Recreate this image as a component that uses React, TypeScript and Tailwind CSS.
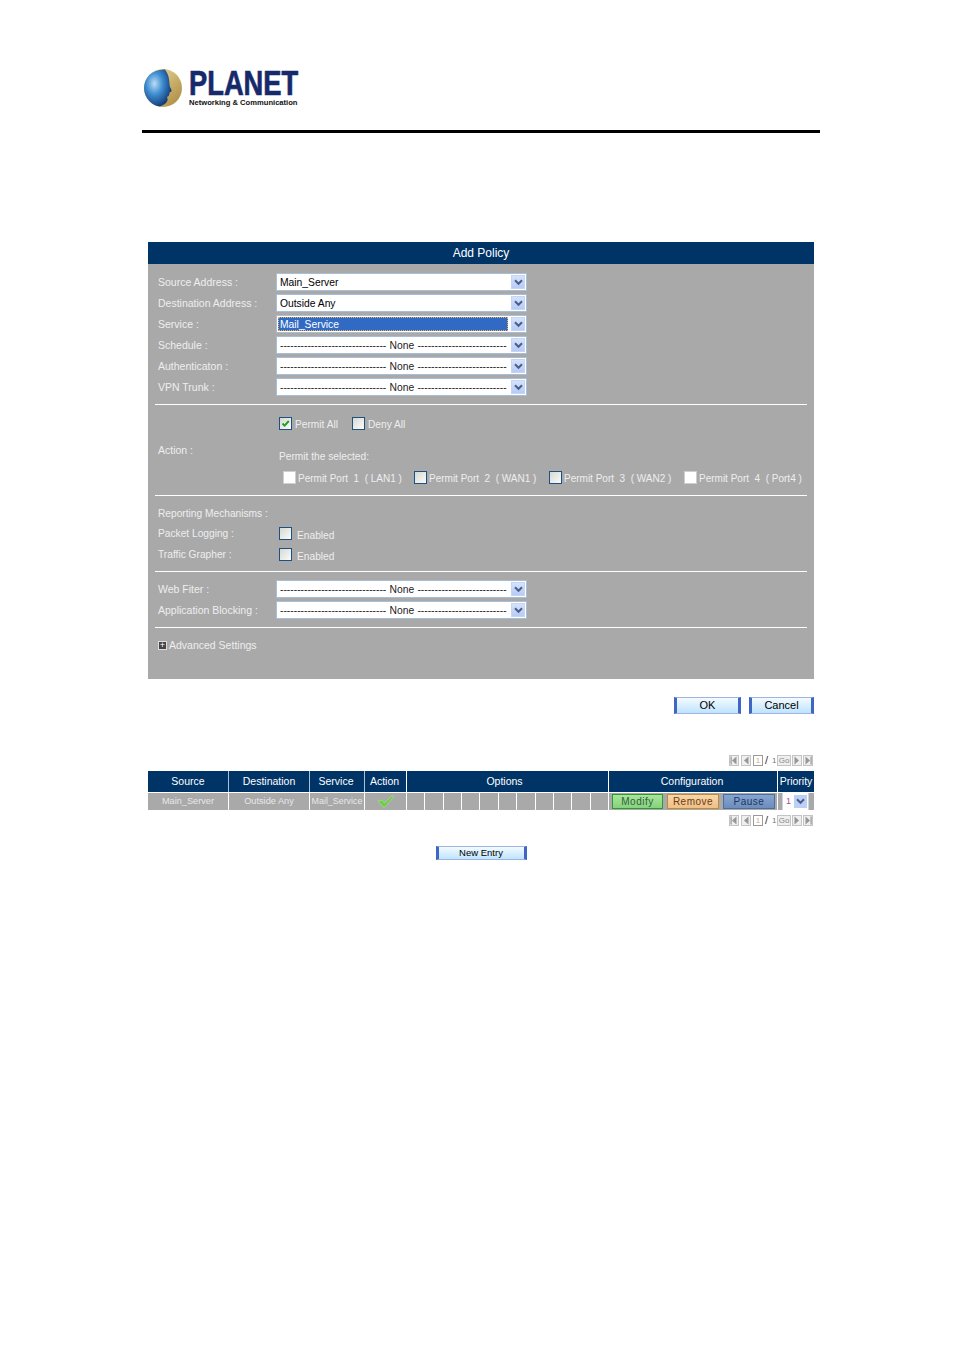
import React from 'react';

const font = "font-['Liberation_Sans','Arial',sans-serif]";

const Chevron = () => (
  <svg width="9" height="7" viewBox="0 0 9 7">
    <path d="M1 1.2 L4.5 4.8 L8 1.2" fill="none" stroke="#4a5f88" strokeWidth="2" />
  </svg>
);

const SelectBox = ({ value, active }: { value: string; active?: boolean }) => {
  const none = value === 'None';
  return (
    <div className="w-[251px] h-[18px] flex items-stretch border border-[#a8bdd6] bg-white p-px">
      <div
        className={`flex-1 min-w-0 flex items-center pt-[2px] text-[10.3px] leading-none whitespace-nowrap overflow-hidden ${
          active ? 'bg-[#316ac5] text-white border border-dotted border-[#f0b040] pl-px' : 'text-black pl-[2px]'
        }`}
      >
        {none ? (
          <>
            <span className="w-[107px] text-[#222]">{'-'.repeat(31)}</span>
            <span className="mx-[3px] w-[25px] text-[#222]">None</span>
            <span className="w-[91px] text-[#222]">{'-'.repeat(26)}</span>
          </>
        ) : (
          value
        )}
      </div>
      <div className="w-[14px] ml-[3px] flex items-center justify-center bg-gradient-to-b from-[#d6e2fc] to-[#b7cbf6] border border-[#c5d5f5]">
        <Chevron />
      </div>
    </div>
  );
};

const Check = ({ checked, plain }: { checked?: boolean; plain?: boolean }) => (
  <span
    className={`w-[13px] h-[13px] shrink-0 flex items-center justify-center border ${
      plain ? 'border-[#cfcfcf] bg-white' : 'border-[#1c5180] bg-gradient-to-br from-[#d8d8d2] to-[#fbfbfb]'
    }`}
  >
    {checked && (
      <svg width="9" height="9" viewBox="0 0 9 9">
        <path d="M1.5 4.5 L3.6 6.6 L7.8 2" fill="none" stroke="#21a121" strokeWidth="2" />
      </svg>
    )}
  </span>
);

const FormRow = ({ label, value, active }: { label: string; value: string; active?: boolean }) => (
  <div className="h-[18px] flex items-center">
    <div className="w-[121px] pl-[3px] pt-[2px] text-[#eeeeee]">{label}</div>
    <SelectBox value={value} active={active} />
  </div>
);

const Divider = () => <div className="h-px bg-white" />;

const BlueButton = ({ label, className }: { label: string; className: string }) => (
  <div
    className={`flex items-center justify-center text-black leading-none border-x-[3px] border-y border-x-[#3f66c4] border-y-[#9fb4e0] bg-gradient-to-b from-[#f3fbff] to-[#bfe3ff] ${className}`}
  >
    {label}
  </div>
);

const PagerIcon = ({ d, bar, className }: { d: 'l' | 'r'; bar?: boolean; className?: string }) => (
  <span className={`w-[10px] h-[11px] border border-[#c4c4c4] bg-[#efefef] flex items-center justify-center ${className ?? ''}`}>
    <svg width="8" height="9" viewBox="0 0 8 9">
      {d === 'l' ? <path d="M6.5 0.5 V8.5 L2 4.5 Z" fill="#969696" /> : <path d="M1.5 0.5 V8.5 L6 4.5 Z" fill="#969696" />}
      {bar && <rect x={d === 'l' ? 0.5 : 6.5} y="0.5" width="1.2" height="8" fill="#969696" />}
    </svg>
  </span>
);

const Pager = () => (
  <div className="flex justify-end items-center h-[11px] pr-px">
    <div className="flex items-center">
      <PagerIcon d="l" bar />
      <PagerIcon d="l" className="ml-[2px]" />
      <span className="ml-[2px] w-[10px] h-[11px] border border-[#9a9a9a] text-[8px] leading-[10px] text-center text-[#d0b080]">1</span>
      <span className="ml-[2px] w-[3px] text-[11px] leading-none text-[#333]">/</span>
      <span className="ml-[4px] w-[4px] text-[8px] leading-none text-[#777]">1</span>
      <span className="ml-px w-[14px] h-[11px] border border-[#c4c4c4] bg-[#efefef] text-[8px] leading-[10px] text-center text-[#888]">Go</span>
      <PagerIcon d="r" className="ml-px" />
      <PagerIcon d="r" bar className="ml-px" />
    </div>
  </div>
);

const Logo = () => (
  <div className="flex items-start pl-px">
    <svg width="41" height="40" viewBox="0 0 41 40" className="shrink-0">
      <defs>
        <radialGradient id="globe" cx="38%" cy="38%" r="65%">
          <stop offset="0%" stopColor="#bcdcf4" />
          <stop offset="45%" stopColor="#3f8fd2" />
          <stop offset="100%" stopColor="#123a78" />
        </radialGradient>
        <linearGradient id="gold" x1="0" y1="0" x2="1" y2="1">
          <stop offset="0%" stopColor="#f2e2a8" />
          <stop offset="100%" stopColor="#a8863a" />
        </linearGradient>
      </defs>
      <circle cx="20" cy="20" r="19" fill="url(#gold)" />
      <path d="M22 1.5 C9 1 1 10 1 20 C1 30 9 38 17 38.5 C23 36 26 33 24 29 C27 28 26 25 27 24 C29 24 29 22 27 19 C26 15 27 8 22 1.5 Z" fill="url(#globe)" />
    </svg>
    <div className="ml-[5px] w-[110px]">
      <div className="h-[30px] text-[35px] leading-[30px] font-bold text-[#16296b] whitespace-nowrap origin-left scale-x-[0.78] [-webkit-text-stroke:0.7px_#16296b]">
        PLANET
      </div>
      <div className="text-[8px] leading-[9px] font-bold text-[#111] whitespace-nowrap origin-left scale-x-[0.95]">
        Networking &amp; Communication
      </div>
    </div>
  </div>
);

const th = 'flex items-center justify-center text-white border-l border-[#a9c0d6] h-full';
const td = 'flex items-center justify-center border-l border-white h-full whitespace-nowrap overflow-hidden';
const cols = 'grid grid-cols-[80px_81px_55px_42px_202px_169px_37px]';

const PortItem = ({ label, plain, className }: { label: string; plain?: boolean; className: string }) => (
  <div className={`flex items-center ${className}`}>
    <Check plain={plain} />
    <span className="ml-[2px] mt-px whitespace-pre">{label}</span>
  </div>
);

export default function App() {
  return (
    <div className={`w-[954px] h-[1350px] bg-white overflow-hidden pt-[68px] text-[10.5px] ${font}`}>
      <div className="ml-[142px] w-[678px] h-[65px] border-b-[3px] border-black">
        <Logo />
      </div>

      <div className="ml-[148px] w-[666px] mt-[109px]">
        <div className="h-[22px] bg-[#003366] text-white text-[12px] flex items-center justify-center">Add Policy</div>

        <div className="h-[415px] bg-[#a9a9a9] px-[7px] pt-[9px] text-[#eeeeee]">
          <div className="flex flex-col gap-[3px]">
            <FormRow label="Source Address :" value="Main_Server" />
            <FormRow label="Destination Address :" value="Outside Any" />
            <FormRow label="Service :" value="Mail_Service" active />
            <FormRow label="Schedule :" value="None" />
            <FormRow label="Authenticaton :" value="None" />
            <FormRow label="VPN Trunk :" value="None" />
          </div>

          <div className="mt-[8px]"><Divider /></div>

          <div className="h-[90px] flex">
            <div className="w-[124px] pl-[3px] pt-[38px]">Action :</div>
            <div className="flex-1 pt-[12px] text-[10.2px]">
              <div className="flex items-center h-[13px]">
                <Check checked />
                <span className="ml-[3px] mt-[2px] w-[57px]">Permit All</span>
                <Check />
                <span className="ml-[3px] mt-[2px]">Deny All</span>
              </div>
              <div className="mt-[20px] h-[13px] leading-[13px]">Permit the selected:</div>
              <div className="mt-[8px] flex items-center h-[13px] whitespace-pre text-[10px]">
                <PortItem plain label="Permit Port  1  ( LAN1 )" className="ml-[4px] w-[131px]" />
                <PortItem label="Permit Port  2  ( WAN1 )" className="w-[135px]" />
                <PortItem label="Permit Port  3  ( WAN2 )" className="w-[135px]" />
                <PortItem plain label="Permit Port  4  ( Port4 )" className="" />
              </div>
            </div>
          </div>

          <Divider />

          <div className="h-[75px] pt-[11px] text-[10.2px]">
            <div className="pl-[3px] h-[13px] leading-[13px]">Reporting Mechanisms :</div>
            <div className="mt-[7px] h-[13px] flex items-center">
              <span className="w-[124px] pl-[3px]">Packet Logging :</span>
              <Check />
              <span className="ml-[5px] mt-[4px]">Enabled</span>
            </div>
            <div className="mt-[8px] h-[13px] flex items-center">
              <span className="w-[124px] pl-[3px]">Traffic Grapher :</span>
              <Check />
              <span className="ml-[5px] mt-[4px]">Enabled</span>
            </div>
          </div>

          <Divider />

          <div className="mt-[8px] flex flex-col gap-[3px]">
            <FormRow label="Web Fiter :" value="None" />
            <FormRow label="Application Blocking :" value="None" />
          </div>

          <div className="mt-[8px]"><Divider /></div>

          <div className="mt-[11px] pl-[3px] h-[13px] flex items-center">
            <span className="w-[9px] h-[9px] bg-[#444] border border-[#ddd] text-white text-[9px] leading-[7px] text-center">+</span>
            <span className="ml-[2px]">Advanced Settings</span>
          </div>
        </div>

        <div className="mt-[18px] flex justify-end gap-[8px] text-[11px]">
          <BlueButton label="OK" className="w-[67px] h-[17px]" />
          <BlueButton label="Cancel" className="w-[65px] h-[17px]" />
        </div>

        <div className="mt-[41px]"><Pager /></div>

        <div className="mt-[5px] text-[10.5px]">
          <div className={`${cols} h-[21px] bg-[#003366]`}>
            <div className="flex items-center justify-center text-white h-full">Source</div>
            <div className={th}>Destination</div>
            <div className={`${th} pr-[2px]`}>Service</div>
            <div className={`${th} pr-[2px]`}>Action</div>
            <div className="flex items-center justify-center text-white border-l border-white h-full pr-[6px]">Options</div>
            <div className="flex items-center justify-center text-white border-l border-white h-full pr-[2px]">Configuration</div>
            <div className="flex items-center justify-center text-white border-l border-white h-full whitespace-nowrap">Priority</div>
          </div>
          <div className={`${cols} h-[17px] mt-px bg-[#a9a9a9] text-[#e8e8e8] text-[9.2px]`}>
            <div className="flex items-center justify-center h-full">Main_Server</div>
            <div className={td}>Outside Any</div>
            <div className={`${td} text-[8.9px]`}>Mail_Service</div>
            <div className={td}>
              <svg width="18" height="13" viewBox="0 0 18 13">
                <path d="M1 6 L5 5 L7.5 8 L15 1 L17 1.5 L8 12 L6 12 Z" fill="#6cd040" stroke="#b4e8a4" strokeWidth="0.5" />
              </svg>
            </div>
            <div className="flex h-full">
              {Array.from({ length: 11 }).map((_, i) => (
                <div key={i} className="flex-1 border-l border-white" />
              ))}
            </div>
            <div className="h-full border-l border-white flex items-center gap-[4px] pl-[3px] text-[10px] tracking-[0.5px]">
              <div className="w-[51px] h-[15px] flex items-center justify-center border border-[#2e9a36] bg-gradient-to-b from-[#a9e59a] to-[#86d27c] text-[#2f5f3a]">Modify</div>
              <div className="w-[52px] h-[15px] flex items-center justify-center border border-[#bd8a3d] bg-gradient-to-b from-[#f8d6a8] to-[#f0bf85] text-[#6a3a14]">Remove</div>
              <div className="w-[52px] h-[15px] flex items-center justify-center border border-[#4e6f9e] bg-gradient-to-b from-[#86a4cf] to-[#6c8dbd] text-[#1c3660]">Pause</div>
            </div>
            <div className="h-full border-l border-white flex items-center pl-[4px]">
              <div className="w-[27px] h-full bg-white flex items-center border-x border-[#c8d4e6]">
                <span className="w-[11px] text-center text-[9px] text-[#a04d9c]">1</span>
                <span className="w-[13px] h-[13px] flex items-center justify-center bg-[#bcd0f7]">
                  <Chevron />
                </span>
              </div>
            </div>
          </div>
        </div>

        <div className="mt-[5px]"><Pager /></div>

        <div className="mt-[20px] flex justify-center text-[9.5px]">
          <BlueButton label="New Entry" className="w-[91px] h-[14px]" />
        </div>
      </div>
    </div>
  );
}
